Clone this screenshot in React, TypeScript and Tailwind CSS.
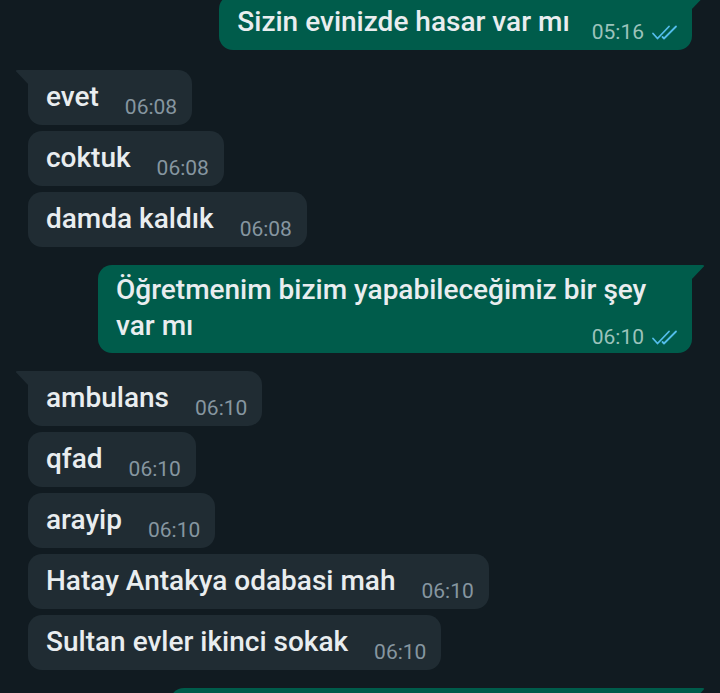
import React from "react";

type Msg = { text: string; time: string; out?: boolean; tail?: boolean; wrap?: boolean };

// chat log, grouped by sender run
const groups: Msg[][] = [
  [{ text: "Sizin evinizde hasar var mı", time: "05:16", out: true, tail: true }],
  [
    { text: "evet", time: "06:08", tail: true },
    { text: "coktuk", time: "06:08" },
    { text: "damda kaldık", time: "06:08" },
  ],
  [
    {
      text: "Öğretmenim bizim yapabileceğimiz bir şey var mı",
      time: "06:10",
      out: true,
      tail: true,
      wrap: true,
    },
  ],
  [
    { text: "ambulans", time: "06:10", tail: true },
    { text: "qfad", time: "06:10" },
    { text: "arayip", time: "06:10" },
    { text: "Hatay Antakya odabasi mah", time: "06:10" },
    { text: "Sultan evler ikinci sokak", time: "06:10" },
  ],
];

function Ticks() {
  return (
    <svg width="27" height="15" viewBox="0 0 27 15" fill="none" stroke="#53bdeb" strokeWidth="1.8" strokeLinecap="round" strokeLinejoin="round">
      <path d="M2 8.5 L6.5 13.5 L18 1.5" />
      <path d="M11.5 12 L13 13.5 L25 1.5" />
    </svg>
  );
}

function Tail({ out }: { out?: boolean }) {
  if (out) {
    return (
      <svg className="absolute top-0 -right-[13px]" width="14" height="15" viewBox="0 0 14 15">
        <path d="M0 0 L11.5 0 Q14 0 12.8 1.6 L0 15 Z" fill="#005c4b" />
      </svg>
    );
  }
  return (
    <svg className="absolute top-0 -left-[13px]" width="14" height="15" viewBox="0 0 14 15">
      <path d="M14 0 L2.5 0 Q0 0 1.2 1.6 L14 15 Z" fill="#202c33" />
    </svg>
  );
}

function Meta({ m }: { m: Msg }) {
  return (
    <span className="inline-flex items-center gap-[7px] h-[24px] font-normal">
      <span className={`text-[21px] leading-[24px] ${m.out ? "text-[#9cc3bb]" : "text-[#8696a0]"}`}>{m.time}</span>
      {m.out && <Ticks />}
    </span>
  );
}

function Bubble({ m }: { m: Msg }) {
  const bg = m.out ? "bg-[#005c4b]" : "bg-[#202c33]";
  const corner = m.tail ? (m.out ? "rounded-tr-none" : "rounded-tl-none") : "";

  if (m.wrap) {
    // long text: time floats at the right of the last line
    return (
      <div className={`relative w-[594px] flow-root ${bg} ${corner} rounded-[14px] pl-[18px] pr-[14px] pt-[7px] pb-[4px]`}>
        {m.tail && <Tail out={m.out} />}
        <p className="text-[28px] leading-[36px] font-medium text-[#e9edef]">
          {m.text}
          <span className="float-right flex mt-[17px] ml-[20px] leading-[24px]">
            <Meta m={m} />
          </span>
        </p>
      </div>
    );
  }

  return (
    <div
      className={`relative h-[55px] ${bg} ${corner} rounded-[14px] pl-[18px] ${m.out ? "pr-[14px] gap-[22px]" : "pr-[15px] gap-[26px]"} pt-[9px] pb-[6px] flex items-end`}
    >
      {m.tail && <Tail out={m.out} />}
      <span className="text-[28px] leading-[36px] font-medium mb-[4px] text-[#e9edef] whitespace-nowrap">{m.text}</span>
      <Meta m={m} />
    </div>
  );
}

export default function App() {
  return (
    <div className="w-[720px] h-[693px] overflow-hidden bg-[#111b21] font-['Roboto',sans-serif]">
      <div className="-mt-[5px] px-[28px] flex flex-col gap-[18px]">
        {groups.map((g, i) => (
          <div key={i} className={`flex flex-col gap-[6px] ${g[0].out ? "items-end" : "items-start"} ${i === 1 ? "mt-[2px]" : ""}`}>
            {g.map((m, j) => (
              <Bubble key={j} m={m} />
            ))}
          </div>
        ))}
        {/* next outgoing run, cut off at the bottom */}
        <div className="flex flex-col items-end">
          <div className="relative w-[522px] h-[55px] bg-[#005c4b] rounded-[14px] rounded-tr-none">
            <Tail out />
          </div>
        </div>
      </div>
    </div>
  );
}
